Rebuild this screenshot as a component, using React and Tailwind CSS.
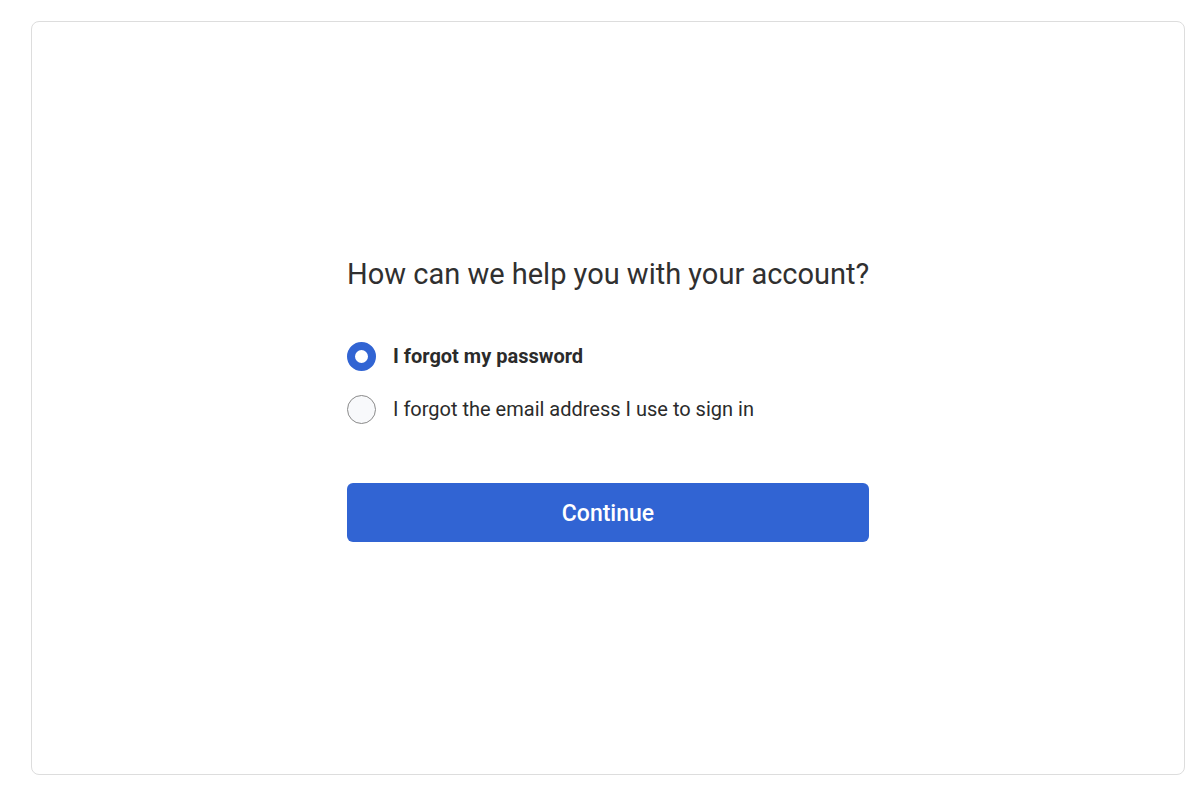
export default function App() {
  return (
    <div className="w-[1200px] h-[808px] bg-white pl-[31px] pt-[21px]" style={{ fontFamily: 'Roboto, "Liberation Sans", sans-serif' }}>
      <div className="w-[1154px] h-[754px] border border-[#dddddd] rounded-[8px] bg-white flex items-center justify-center">
        <div className="w-[522px] flex flex-col mt-[4px]">
          <h1 className="text-[29px] leading-[32px] text-[#303030] font-normal whitespace-nowrap">How can we help you with your account?</h1>
          <div className="mt-[52px] flex flex-col gap-[24px]">
            <label className="flex items-center gap-[17px]">
              <span className="w-[29px] h-[29px] rounded-full border-[8px] border-[#3164d3] bg-white box-border"></span>
              <span className="text-[20px] leading-[29px] font-bold text-[#2b2b2b]">I forgot my password</span>
            </label>
            <label className="flex items-center gap-[17px]">
              <span className="w-[29px] h-[29px] rounded-full border border-[#8a8a8a] bg-[#f8f9fb] box-border"></span>
              <span className="text-[20px] leading-[29px] text-[#2b2b2b]">I forgot the email address I use to sign in</span>
            </label>
          </div>
          <button className="mt-[59px] h-[59px] w-[522px] rounded-[6px] bg-[#3164d3] text-white text-[23px] font-medium pt-[3px]">Continue</button>
        </div>
      </div>
    </div>
  );
}
